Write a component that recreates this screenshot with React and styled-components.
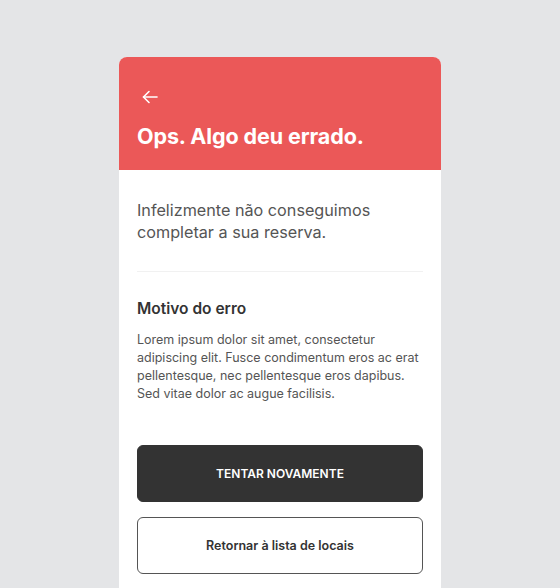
import styled, { createGlobalStyle } from "styled-components";

const GlobalStyle = createGlobalStyle`
    html, body {
        margin: 0;
        padding: 0;
        background: #e4e5e7;
        font-family: Inter, "Noto Sans", sans-serif;
    }
    * {
        box-sizing: border-box;
    }
`

const Page = styled.div`
    display: flex;
    justify-content: center;
    padding-top: 57px;
    height: 588px;
    overflow: hidden;
`

const Card = styled.div`
    width: 322px;
    min-height: 560px;
    background: #ffffff;
    border-radius: 8px 8px 0 0;
    overflow: hidden;
    display: flex;
    flex-direction: column;
`

const Header = styled.div`
    background: #eb5858;
    height: 113px;
    padding: 31px 18px 0 18px;
    display: flex;
    flex-direction: column;
    gap: 17px;
    h1{
        margin: 0;
        color: #ffffff;
        font-size: 21.5px;
        font-weight: 700;
        letter-spacing: -0.1px;
    }
`

const BackButton = styled.button`
    background: none;
    border: none;
    padding: 0;
    margin-left: 4px;
    width: 18px;
    height: 18px;
    display: flex;
    align-items: center;
    justify-content: center;
    color: #ffffff;
`

const Body = styled.div`
    padding: 29px 18px 0 18px;
    display: flex;
    flex-direction: column;
`

const Intro = styled.p`
    margin: 0;
    font-size: 16.2px;
    line-height: 22px;
    color: #555555;
    padding-bottom: 28px;
    border-bottom: 1px solid #f1f1f1;
`

const Motivo = styled.div`
    padding-top: 27px;
    display: flex;
    flex-direction: column;
    gap: 13px;
    h2{
        margin: 0;
        font-size: 15.5px;
        font-weight: 600;
        color: #333333;
    }
    p{
        margin: 0;
        font-size: 12.5px;
        line-height: 18px;
        color: #555555;
    }
`

const Actions = styled.div`
    display: flex;
    flex-direction: column;
    gap: 15px;
    margin-top: 42px;
`

const Botao = styled.button`
    height: 57px;
    width: 100%;
    border-radius: 6px;
    font-family: Inter, "Noto Sans", sans-serif;
    background: ${(props) => props.primary ? "#333333" : "#ffffff"};
    color: ${(props) => props.primary ? "#ffffff" : "#333333"};
    border: 1px solid ${(props) => props.primary ? "#333333" : "#555555"};
    font-size: ${(props) => props.primary ? "12px" : "12.5px"};
    font-weight: 600;
    text-transform: ${(props) => props.primary ? "uppercase" : "none"};
`

function App() {
    return (
        <>
            <GlobalStyle />
            <Page>
                <Card>
                    <Header>
                        <BackButton>
                            <svg width="16" height="16" viewBox="0 0 16 16" fill="none" stroke="currentColor" strokeWidth="1.6" strokeLinecap="round" strokeLinejoin="round">
                                <path d="M15 8H1.5" />
                                <path d="M7 2.5L1.5 8 7 13.5" />
                            </svg>
                        </BackButton>
                        <h1>Ops. Algo deu errado.</h1>
                    </Header>
                    <Body>
                        <Intro>Infelizmente não conseguimos completar a sua reserva.</Intro>
                        <Motivo>
                            <h2>Motivo do erro</h2>
                            <p>Lorem ipsum dolor sit amet, consectetur adipiscing elit. Fusce condimentum eros ac erat pellentesque, nec pellentesque eros dapibus. Sed vitae dolor ac augue facilisis.</p>
                        </Motivo>
                        <Actions>
                            <Botao primary>Tentar novamente</Botao>
                            <Botao>Retornar à lista de locais</Botao>
                        </Actions>
                    </Body>
                </Card>
            </Page>
        </>
    );
}

export default App;
